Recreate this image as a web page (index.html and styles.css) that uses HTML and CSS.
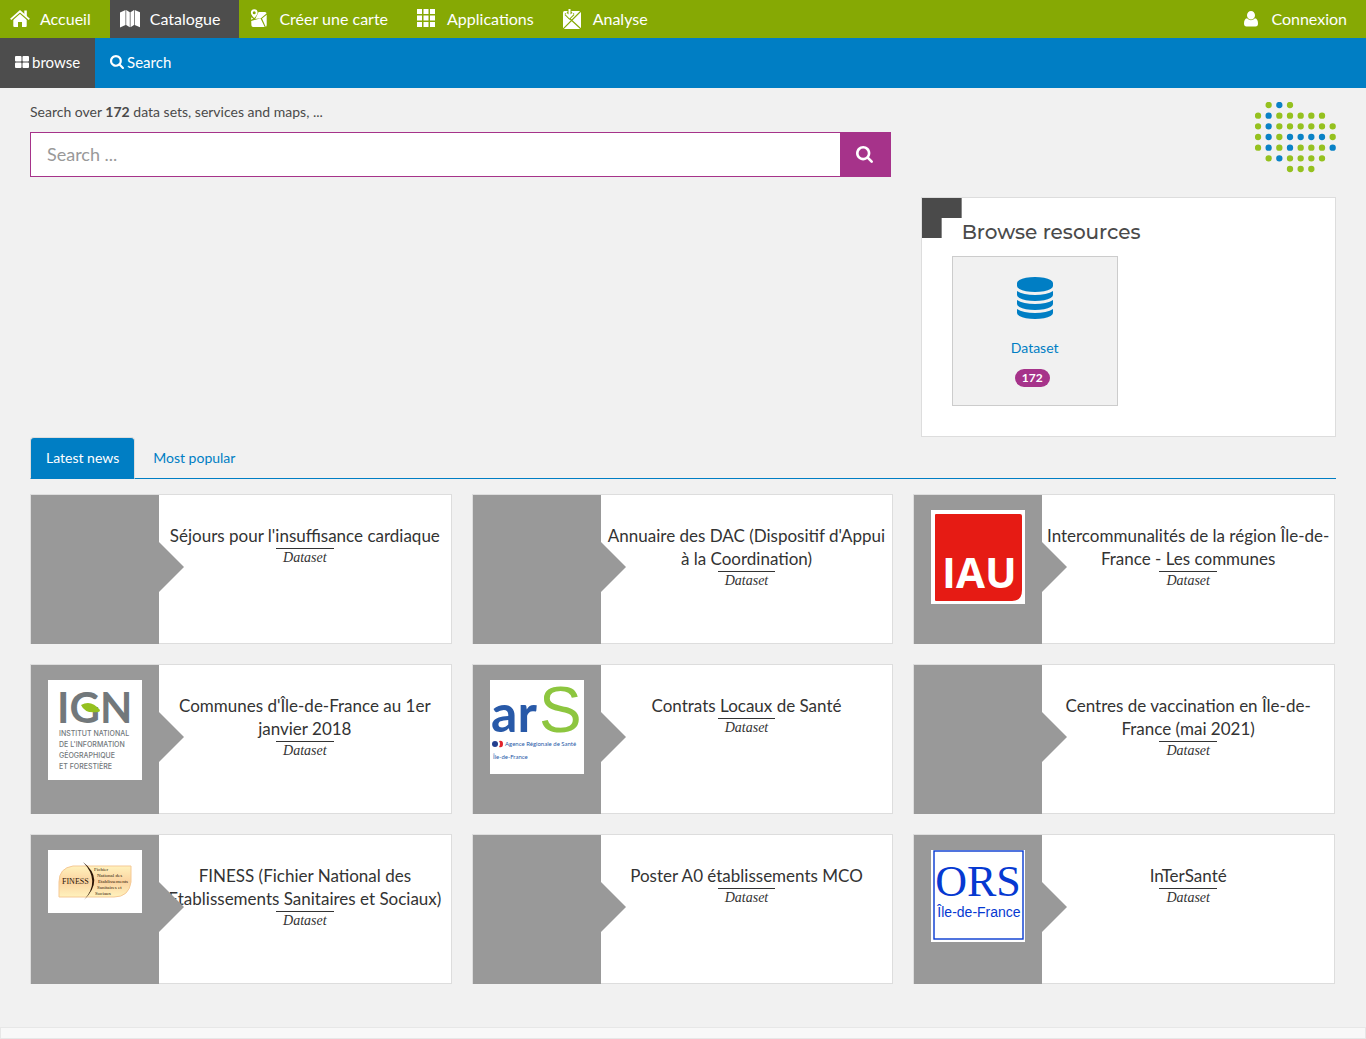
FILE: index.html
```html
<!DOCTYPE html>
<html lang="fr">
<head>
<meta charset="utf-8">
<meta name="viewport" content="width=device-width, initial-scale=1">
<title>Catalogue</title>
<link rel="stylesheet" href="styles.css">
</head>
<body>
<svg class="sprite" aria-hidden="true">
  <symbol id="search" viewBox="0 128 1664 1664"><path d="M1152 832q0-185-131.500-316.500t-316.500-131.500-316.500 131.500-131.500 316.500 131.500 316.500 316.500 131.500 316.500-131.500 131.500-316.500zm512 832q0 52-38 90t-90 38q-54 0-90-38l-343-342q-179 124-399 124-143 0-273.500-55.500t-225-150-150-225-55.500-273.500 55.500-273.500 150-225 225-150 273.500-55.500 273.500 55.500 225 150 150 225 55.500 273.500q0 220-124 399l343 343q37 37 37 90z"/></symbol>
</svg>

<nav class="topbar">
  <a class="topbar-item" href="#"><svg class="nav-icon" viewBox="0 0 20 20"><path d="M10 3.800 3.300 9.800V17q0 1 1 1H8v-5h4v5h3.700q1 0 1-1V9.800z"/><path d="M.7 10.400 10 2.200l9.300 8.200" fill="none" stroke="#86a904" stroke-width="4"/><path d="M.7 10.400 10 2.200l9.300 8.200" fill="none" stroke="currentColor" stroke-width="1.800"/><path d="M14.300 1.500h2.500v6l-2.500-2.200z"/></svg>Accueil</a>
  <a class="topbar-item active" href="#"><svg class="nav-icon" viewBox="0 0 20 20"><path d="M0 3.500 5.500 1v15L0 18.500zM6.200 1l3.600 2.300v15L6.200 16zM10.500 3.300 14 1v15l-3.500 2.300zM14.700 1 20 3.300v15L14.700 16z"/></svg>Catalogue</a>
  <a class="topbar-item" href="#"><svg class="nav-icon" viewBox="0 0 20 20"><path fill-rule="evenodd" d="M5.200.2a3.400 3.400 0 0 1 3.400 3.400C8.600 6.200 5.200 9 5.200 9S1.900 6.200 1.900 3.600A3.400 3.400 0 0 1 5.200.2zm0 2a1.500 1.500 0 1 0 0 3 1.500 1.500 0 0 0 0-3z"/><path d="M9.600 3H16q1.500 0 1.500 1.500l-5.300 4.600L6.200 10zM2.200 8.200l2 1.500-2 1zM2.200 12l9.300-2.700 4.200 8.600H4.200Q2.500 18 2.400 16.300zM13 9.500l4.700-3.800V16q0 1.500-1 1.700z"/></svg>Créer une carte</a>
  <a class="topbar-item" href="#"><svg class="nav-icon" viewBox="0 0 20 20"><path d="M0 0h5v5H0zm6.500 0h5v5h-5zM13 0h5v5h-5zM0 6.500h5v5H0zm6.500 0h5v5h-5zm6.500 0h5v5h-5zM0 13h5v5H0zm6.500 0h5v5h-5zm6.500 0h5v5h-5z"/></svg>Applications</a>
  <a class="topbar-item" href="#"><svg class="nav-icon" viewBox="0 0 20 20"><rect y="2" width="18" height="18" rx="1.500"/><path class="cut" d="m0 20 18-18M5 8l13 12M6.500 0v9M2 4.500l4.500 4.300L11 4.500"/><path class="cut wide" d="M6.500 0v7.500M3 4.500 6.500 8 10 4.500"/><path class="pointer" d="M6.500 0v7.500M3 4.500 6.500 8 10 4.500"/></svg>Analyse</a>
  <a class="topbar-item login" href="#"><svg class="nav-icon" viewBox="0 0 20 20"><path d="M6 6.300a4 4.300 0 0 1 8 0 4 4.300 0 0 1-8 0zM6 9.300q4 3.800 8 0 3 .7 3 5.200 0 3-2.500 3h-9Q3 17.500 3 14.500q0-4.500 3-5.200z"/></svg>Connexion</a>
</nav>

<nav class="subbar">
  <a class="subbar-item active" href="#"><svg class="sub-icon" viewBox="0 0 14 14"><path d="M1 1h4.500q1 0 1 1v3.500q0 1-1 1H1q-1 0-1-1V2q0-1 1-1zm7.500 0H13q1 0 1 1v3.500q0 1-1 1H8.500q-1 0-1-1V2q0-1 1-1zM1 7.500h4.500q1 0 1 1V12q0 1-1 1H1q-1 0-1-1V8.500q0-1 1-1zm7.500 0H13q1 0 1 1V12q0 1-1 1H8.500q-1 0-1-1V8.500q0-1 1-1z"/></svg>browse</a>
  <a class="subbar-item" href="#"><svg class="sub-icon"><use href="#search"/></svg>Search</a>
</nav>

<main class="page">
  <div class="row intro">
    <form class="wide-col">
      <label class="summary" for="query">Search over <b>172</b> data sets, services and maps, ...</label>
      <div class="search-group">
        <input class="search-input" id="query" type="text" placeholder="Search ...">
        <button class="search-button" type="button" aria-label="Search"><svg class="search-icon"><use href="#search"/></svg></button>
      </div>
    </form>
    <div class="side-col">
      <svg class="dots" viewBox="0 3 243 213" role="img" aria-label="Logo"><path class="dots-green" d="M41 12h0M105 12h0M9 44h0M73 44h0M105 44h0M137 44h0M169 44h0M201 44h0M9 76h0M73 76h0M105 76h0M137 76h0M169 76h0M201 76h0M233 76h0M9 108h0M73 108h0M233 108h0M9 140h0M73 140h0M137 140h0M169 140h0M201 140h0M41 172h0M105 172h0M137 172h0M169 172h0M201 172h0M105 204h0M137 204h0M169 204h0"/><path class="dots-blue" d="M73 12h0M41 44h0M41 76h0M41 108h0M105 108h0M137 108h0M169 108h0M201 108h0M41 140h0M105 140h0M233 140h0M73 172h0"/></svg>
    </div>
  </div>

  <div class="row">
    <div class="wide-col"></div>
    <div class="side-col">
      <section class="resources">
        <h2 class="resources-title">Browse resources</h2>
        <a class="tile" href="#">
          <svg class="tile-icon" viewBox="0 0 1536 1792"><path d="M768 768q237 0 443-43t325-127v170q0 69-103 128t-280 93.500-385 34.500-385-34.500-280-93.500-103-128v-170q119 84 325 127t443 43zm0 768q237 0 443-43t325-127v170q0 69-103 128t-280 93.500-385 34.500-385-34.500-280-93.500-103-128v-170q119 84 325 127t443 43zm0-384q237 0 443-43t325-127v170q0 69-103 128t-280 93.500-385 34.500-385-34.500-280-93.500-103-128v-170q119 84 325 127t443 43zm0-1152q208 0 385 34.500t280 93.500 103 128v128q0 69-103 128t-280 93.500-385 34.500-385-34.500-280-93.500-103-128v-128q0-69 103-128t280-93.500 385-34.500z"/></svg>
          <span>Dataset</span>
          <span class="badge">172</span>
        </a>
      </section>
    </div>
  </div>

  <div class="news">
    <div class="tabs">
      <a class="tab active" href="#">Latest news</a>
      <a class="tab" href="#">Most popular</a>
    </div>
    <div class="cards">
      <article class="card">
        <div class="thumb"></div>
        <div class="card-body"><h3 class="card-title">Séjours pour l'insuffisance cardiaque</h3><span class="kind">Dataset</span></div>
      </article>
      <article class="card">
        <div class="thumb"></div>
        <div class="card-body"><h3 class="card-title">Annuaire des DAC (Dispositif d'Appui à la Coordination)</h3><span class="kind">Dataset</span></div>
      </article>
      <article class="card">
        <div class="thumb"><svg class="logo" viewBox="0 0 94 94"><path fill="#fff" d="M0 0h94v94H0z"/><path fill="#e61b14" d="M5 4h84q2 0 2 2v74q0 11-10 11H5q-1 0-1-1V5q0-1 1-1z"/><text class="iau" x="11" y="78">IAU</text></svg></div>
        <div class="card-body"><h3 class="card-title">Intercommunalités de la région Île-de-France - Les communes</h3><span class="kind">Dataset</span></div>
      </article>
      <article class="card">
        <div class="thumb"><svg class="logo" viewBox="0 0 94 100"><path fill="#fff" d="M0 0h94v100H0z"/><text class="ign" x="9" y="43">IGN</text><path fill="#fff" d="M31 23h14v6H31z"/><path fill="#95c11f" d="M33 25q10-6 19 5 0 2-2 2-13 2-17-7z"/><g class="ign-name"><text x="11" y="56">INSTITUT NATIONAL</text><text x="11" y="67">DE L'INFORMATION</text><text x="11" y="78">GÉOGRAPHIQUE</text><text x="11" y="89">ET FORESTIÈRE</text></g></svg></div>
        <div class="card-body"><h3 class="card-title">Communes d'Île-de-France au 1er janvier 2018</h3><span class="kind">Dataset</span></div>
      </article>
      <article class="card">
        <div class="thumb"><svg class="logo" viewBox="0 0 94 94"><path fill="#fff" d="M0 0h94v94H0z"/><text class="ars-blue" x="1" y="52">ar</text><text class="ars-green" x="49" y="52">S</text><circle cx="5" cy="64" r="3" fill="#243f8f"/><path d="M9 61q4-1 4 3t-4 3q2-3 0-6z" fill="#e2232c"/><g class="ars-name"><text x="15" y="66">Agence Régionale de Santé</text><text x="3" y="79">Île-de-France</text></g></svg></div>
        <div class="card-body"><h3 class="card-title">Contrats Locaux de Santé</h3><span class="kind">Dataset</span></div>
      </article>
      <article class="card">
        <div class="thumb"></div>
        <div class="card-body"><h3 class="card-title">Centres de vaccination en Île-de-France (mai 2021)</h3><span class="kind">Dataset</span></div>
      </article>
      <article class="card">
        <div class="thumb"><svg class="logo" viewBox="0 0 94 63"><defs><linearGradient id="gold" x2="0" y2="1"><stop stop-color="#fff2bd"/><stop offset=".5" stop-color="#fbd3a0"/><stop offset="1" stop-color="#fff2bd"/></linearGradient></defs><path fill="#fff" d="M0 0h94v63H0z"/><path fill="url(#gold)" stroke="#f5c995" d="M25 16h58v16q-2 15-17 15H11V32q0-14 14-16z"/><path fill="#2b1507" d="M35 12q22 17 1 38 17-19-1-38z"/><text class="finess" x="14" y="34">FINESS</text><g class="finess-name"><text x="46" y="21">Fichier</text><text x="49" y="27">National des</text><text x="50" y="33">Etablissements</text><text x="49" y="39">Sanitaires et</text><text x="47" y="45">Sociaux</text></g></svg></div>
        <div class="card-body"><h3 class="card-title">FINESS (Fichier National des Etablissements Sanitaires et Sociaux)</h3><span class="kind">Dataset</span></div>
      </article>
      <article class="card">
        <div class="thumb"></div>
        <div class="card-body"><h3 class="card-title">Poster A0 établissements MCO</h3><span class="kind">Dataset</span></div>
      </article>
      <article class="card">
        <div class="thumb"><svg class="logo" viewBox="0 0 94 92"><path fill="#fff" d="M0 0h94v92H0z"/><rect x="3" y="1" width="89" height="88" fill="none" stroke="#0639d1" stroke-width="1.400"/><text class="ors" x="47" y="46">ORS</text><text class="ors-name" x="48" y="67">Île-de-France</text></svg></div>
        <div class="card-body"><h3 class="card-title">InTerSanté</h3><span class="kind">Dataset</span></div>
      </article>
    </div>
  </div>
</main>
<footer class="footer"></footer>
</body>
</html>
```
FILE: styles.css
```css
* { box-sizing: border-box; }

body {
  margin: 0;
  min-height: 100vh;
  display: flex;
  flex-direction: column;
  background: #f1f1f1;
  color: #4a4a4a;
  font: 14px/20px Lato, sans-serif;
}

a { color: #007ec4; text-decoration: none; }
svg { fill: currentColor; }
.sprite { display: none; }

.topbar { display: flex; background: #86a904; }
.topbar-item {
  display: flex;
  align-items: center;
  gap: 10px;
  height: 38px;
  padding: 0 19px 0 10px;
  color: #fff;
  font-size: 16px;
}
.login { margin-left: auto; }
.nav-icon { width: 20px; height: 20px; }
.cut { fill: none; stroke: #86a904; stroke-width: 1.2; }
.cut.wide { stroke-width: 4; }
.pointer { fill: none; stroke: #fff; stroke-width: 2; }

.subbar { display: flex; background: #007ec4; }
.subbar-item {
  display: flex;
  align-items: center;
  gap: 3px;
  height: 50px;
  padding: 0 15px 2px;
  color: #fff;
  font-size: 15px;
}
.sub-icon { width: 14px; height: 14px; }
.topbar .active, .subbar .active { background: #4d4d4d; }

.page { padding: 0 15px; }
.row { display: grid; grid-template-columns: minmax(0, 2fr) minmax(0, 1fr); }
.wide-col, .side-col { padding: 0 15px; }
.intro { padding: 14px 0 20px; }

.summary { display: block; margin-bottom: 10px; }
.search-group { display: flex; height: 45px; border: 1px solid #a6338a; }
.search-input {
  flex: 1;
  min-width: 0;
  padding: 0 16px 2px;
  border: 0;
  outline: 0;
  font: 18px/24px Lato, sans-serif;
}
.search-input::placeholder { color: #999; opacity: 1; }
.search-button {
  display: grid;
  place-items: center;
  width: 50px;
  padding: 0;
  border: 0;
  background: #a6338a;
  color: #fff;
}
.search-icon { width: 17px; height: 17px; }

.dots { display: block; width: 81px; height: 71px; margin-left: auto; }
.dots path { fill: none; stroke-width: 19; stroke-linecap: round; }
.dots .dots-green { stroke: #95c11f; }
.dots .dots-blue { stroke: #0a82c6; }

.resources {
  position: relative;
  padding: 18px 30px 30px;
  border: 1px solid #ddd;
  background: #fff;
}
.resources::before {
  content: "";
  position: absolute;
  top: 0;
  left: 0;
  width: 40px;
  height: 40px;
  background: #4a4a4a;
  clip-path: polygon(0 0, 100% 0, 100% 50%, 50% 50%, 50% 100%, 0 100%);
}
.resources-title {
  margin: 0 0 8px;
  padding-left: 10px;
  font: 500 20px/32px Montserrat, Inter, sans-serif;
}
.tile {
  display: flex;
  flex-direction: column;
  align-items: center;
  width: 47%;
  height: 150px;
  padding-top: 20px;
  border: 1px solid #ccc;
  background: #f1f1f1;
}
.tile-icon { width: 36px; height: 42px; margin-bottom: 19px; }
.badge {
  margin: 11px 5px 0 0;
  padding: 0 7px;
  border-radius: 9px;
  background: #a6338a;
  color: #fff;
  font-size: 12px;
  font-weight: bold;
  line-height: 18px;
}

.news { padding: 0 15px; }
.tabs { display: flex; gap: 2px; border-bottom: 1px solid #007ec4; }
.tab {
  margin-bottom: -1px;
  padding: 10px 15px;
  border: 1px solid transparent;
  border-radius: 4px 4px 0 0;
}
.tab.active { border-color: #ddd #ddd #007ec4; background: #007ec4; color: #fff; }

.cards {
  display: grid;
  grid-template-columns: repeat(3, minmax(0, 1fr));
  gap: 20px;
  padding: 15px 1px 43px 0;
}
.card { display: flex; height: 150px; border: 1px solid #ddd; background: #fff; }
.thumb {
  position: relative;
  flex: none;
  width: 128px;
  height: 149px;
  padding: 15px 17px;
  background: #999;
}
.thumb::after {
  content: "";
  position: absolute;
  top: 47px;
  left: 100%;
  border: 25px solid transparent;
  border-left-color: #999;
  border-right-width: 0;
}
.logo { display: block; width: 94px; }
.card-body { flex: 1; min-width: 0; padding: 29px 3px 0; color: #333; text-align: center; }
.card-title { margin: 0 0 1px; font-size: 17px; font-weight: normal; line-height: 23px; }
.kind {
  display: inline-block;
  padding: 0 7px;
  border-top: 1px solid #333;
  font: italic 14px/18px "Liberation Serif", serif;
  vertical-align: top;
}

.iau { fill: #fff; font: bold 42px "Open Sans", sans-serif; }
.ign { fill: #72787b; font: bold 42px Lato, sans-serif; }
.ign-name { fill: #72787b; font: 500 7px Inter, sans-serif; }
.ars-blue { fill: #2859a8; font: bold 52px Lato, sans-serif; }
.ars-green { fill: #8dc63f; font: 64px "Liberation Sans", sans-serif; }
.ars-name { fill: #2859a8; font: 6px Lato, sans-serif; }
.finess { fill: #2b1507; font: 8px "Liberation Serif", serif; }
.finess-name { fill: #2b1507; font: 5px "Liberation Serif", serif; }
.ors { fill: #0639d1; font: 44px "Liberation Serif", serif; text-anchor: middle; }
.ors-name { fill: #0639d1; font: 14px "Liberation Sans", sans-serif; text-anchor: middle; }

.footer { flex: 1; border: 1px solid #e7e7e7; background: #f8f8f8; }
```
